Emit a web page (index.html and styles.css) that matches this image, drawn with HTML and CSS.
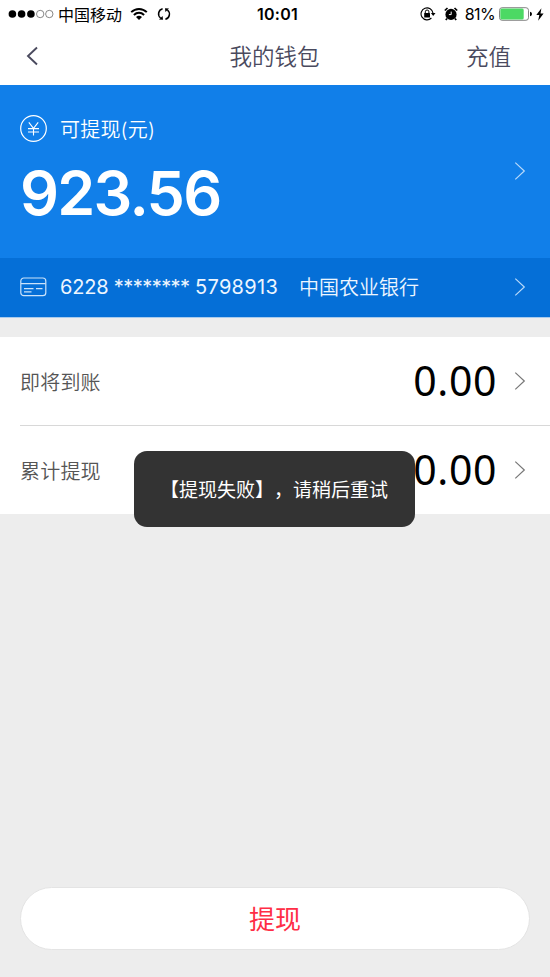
FILE: index.html
```html
<!DOCTYPE html>
<html lang="zh-CN">
<head>
<meta charset="utf-8">
<title>我的钱包</title>
<link rel="stylesheet" href="styles.css">
</head>
<body>
<div class="screen">
  <header class="top">
    <div class="status">
      <div class="status-left">
        <svg class="signal" width="46" height="10" viewBox="0 0 46 10"><g fill="#000"><circle cx="4.4" cy="5" r="3.8"/><circle cx="13.6" cy="5" r="3.8"/><circle cx="22.9" cy="5" r="3.8"/></g><g fill="none" stroke="#555" stroke-width=".7"><circle cx="32.2" cy="5" r="3.7"/><circle cx="41.3" cy="5" r="3.7"/></g></svg>
        <span class="carrier">中国移动</span>
        <svg class="wifi" width="18" height="14" viewBox="0 0 18 14"><g fill="none" stroke="#000" stroke-width="2"><path d="M1.2 5.1C5.7 .8 12.3 .8 16.8 5.1"/><path d="M3.9 8C7 5.1 11 5.1 14.1 8"/></g><path d="M6 10.1Q9 7.5 12 10.1L9 13Z"/></svg>
        <svg class="sync" width="14" height="14" viewBox="0 0 14 14"><g fill="none" stroke="#000" stroke-width="1.5"><path d="M5.6 1.7A5.3 5.3 0 0 0 3.6 11"/><path d="M8.4 12.3A5.3 5.3 0 0 0 10.4 3"/></g><path d="M2 12.4L6 12.8L5.6 9ZM12 1.6L8 1.2L8.4 5Z"/></svg>
      </div>
      <span class="clock">10:01</span>
      <div class="status-right">
        <svg class="lock" width="16" height="14" viewBox="0 0 16 14"><path d="M13 6.1A6 6 0 1 0 11.4 11" fill="none" stroke="#000" stroke-width="1.1"/><path d="M10.9 5.9H15.5L13.2 8.9Z"/><rect x="4.2" y="6.1" width="5.8" height="4.3" rx=".5"/><path d="M5.3 6.5V4.8a1.8 1.8 0 0 1 3.6 0V6.5" fill="none" stroke="#000" stroke-width="1"/></svg>
        <svg class="alarm" width="14" height="14" viewBox="0 0 14 14"><circle cx="7" cy="7.4" r="5.6"/><path d="M.8 3.5L3.5 1M13.2 3.5L10.5 1M3 11.5L1.8 13M11 11.5L12.2 13" stroke="#000" stroke-width="1.7"/><path d="M7.2 4.6V7.6H4.9" fill="none" stroke="#fff" stroke-width="1"/></svg>
        <span class="percent">81%</span>
        <svg class="battery" width="33" height="14" viewBox="0 0 33 14"><rect x=".5" y=".7" width="29" height="12.6" rx="2.6" fill="#fff" stroke="#777" stroke-width=".9"/><rect x="1.3" y="1.5" width="23.4" height="11" rx="1.5" fill="#4cd964"/><path d="M31 4.8Q33 5.3 33 7T31 9.2Z"/></svg>
        <svg class="bolt" width="8" height="13" viewBox="0 0 8 13"><path d="M5.4 .3L.3 7H3.3L2.2 12.7L7.6 5.5H4.5Z"/></svg>
      </div>
    </div>
    <nav class="nav">
      <svg class="back" width="12" height="20" viewBox="0 0 12 20"><path d="M11 1.5L2 10L11 18.5" fill="none" stroke="#4a4a5e" stroke-width="1.9"/></svg>
      <h1 class="title">我的钱包</h1>
      <span class="recharge">充值</span>
    </nav>
  </header>

  <section class="balance">
    <div class="balance-main">
      <div class="balance-label">
        <svg width="27" height="27" viewBox="0 0 27 27" fill="none" stroke="#fff"><circle cx="13.5" cy="13.5" r="12.8" stroke-width="1.2"/><path d="M8.8 7.3L13.5 13.4L18.2 7.3M13.5 13.4V20.5M8 13.6H19M8 17H19" stroke-width="1.1"/></svg>
        <span>可提现(元)</span>
      </div>
      <div class="amount">923.56</div>
    </div>
    <svg class="chevron" width="12" height="20" viewBox="0 0 12 20"><path d="M1.3 1.6L10.3 10L1.3 18.4"/></svg>
  </section>

  <section class="card">
    <svg class="card-icon" width="27" height="20" viewBox="0 0 27 20" fill="none" stroke="#cce3fa" stroke-width="1.2"><rect x=".8" y="1" width="25" height="17.7" rx="3"/><path d="M1 6.7H25.6M4 11.7H13.5M16 11.7H22.5M4 14.8H11.5"/></svg>
    <span class="card-number">6228 <span class="mask">********</span> <span class="tail">5798913</span></span>
    <span class="bank">中国农业银行</span>
    <svg class="chevron" width="12" height="20" viewBox="0 0 12 20"><path d="M1.3 1.6L10.3 10L1.3 18.4"/></svg>
  </section>

  <section class="list">
    <div class="row">
      <span class="row-label">即将到账</span>
      <span class="row-value">0.00</span>
      <svg class="chevron dark" width="12" height="20" viewBox="0 0 12 20"><path d="M1.3 1.6L10.3 10L1.3 18.4"/></svg>
    </div>
    <div class="row">
      <span class="row-label">累计提现</span>
      <span class="row-value">0.00</span>
      <svg class="chevron dark" width="12" height="20" viewBox="0 0 12 20"><path d="M1.3 1.6L10.3 10L1.3 18.4"/></svg>
    </div>
  </section>

  <button class="withdraw">提现</button>
  <div class="toast">【提现失败】，请稍后重试</div>
</div>
</body>
</html>
```
FILE: styles.css
```css
* { box-sizing: border-box; }
body { margin: 0; font-family: Inter, "Noto Sans CJK SC", sans-serif; }
.screen { position: relative; display: flex; flex-direction: column; width: 550px; height: 977px; background: #ededed; overflow: hidden; }
svg { display: block; flex: none; }
.top { flex: none; height: 85px; background: #fff; }
.status { display: grid; grid-template-columns: 1fr auto 1fr; align-items: center; height: 28px; padding: 0 6px 0 8px; color: #000; font-size: 16px; line-height: 28px; }
.status-left, .status-right { display: flex; align-items: center; height: 27px; }
.status-right { justify-content: flex-end; }
.carrier { margin-left: 4px; font-family: "Noto Sans CJK SC", sans-serif; }
.wifi { margin-left: 8px; }
.sync { margin-left: 9px; }
.clock { margin-left: 3px; font-weight: 600; font-size: 16px; letter-spacing: .3px; }
.alarm { margin-left: 8px; }
.percent { margin-left: 7px; letter-spacing: -.6px; }
.battery { margin-left: 4px; }
.bolt { margin-left: 4px; }
.nav { display: grid; grid-template-columns: 1fr auto 1fr; align-items: center; height: 57px; padding: 0 39px 2px 26px; color: #4a4a5e; font-family: "Noto Sans CJK SC", sans-serif; font-weight: 350; font-size: 22.5px; }
.title { margin: 0 0 2px 12px; font-size: 22.5px; font-weight: inherit; line-height: 32px; }
.recharge { justify-self: end; margin-bottom: 2px; line-height: 32px; }
.balance { flex: none; display: flex; align-items: center; justify-content: space-between; height: 173px; padding: 0 24px 2px 20px; background: #117fe9; color: #fff; }
.balance-main { align-self: flex-start; padding-top: 30px; }
.balance-label { display: flex; align-items: center; gap: 13px; height: 27px; font-size: 20px; font-weight: 350; letter-spacing: .2px; }
.amount { margin-top: 15px; height: 72px; line-height: 72px; font-size: 61px; font-weight: 600; letter-spacing: -1.7px; }
.chevron { fill: none; stroke: #b9dafa; stroke-width: 1.2; }
.chevron.dark { stroke: #777; }
.card { flex: none; display: flex; align-items: center; height: 60px; padding: 0 24px 2px 20px; border-bottom: 1px solid #a9cbed; background: #056fd7; color: #edf6ff; font-size: 20px; font-weight: 350; }
.card-number { margin-left: 13px; width: 239px; white-space: nowrap; letter-spacing: -.2px; }
.mask { letter-spacing: -.55px; }
.tail { letter-spacing: .3px; }
.card .chevron { margin-left: auto; }
.list { flex: none; margin-top: 19px; padding-left: 20px; background: #fff; }
.row { display: flex; align-items: center; height: 88px; padding-right: 24px; }
.row + .row { height: 89px; border-top: 1px solid #d8d8d8; }
.row-label { font-size: 20px; font-weight: 350; letter-spacing: .2px; color: #555; }
.row-value { margin-left: auto; margin-right: 17px; padding-bottom: 2px; font-family: "Noto Sans", sans-serif; font-size: 41px; line-height: 60px; font-weight: 400; letter-spacing: .6px; color: #000; }
.card-number { font-weight: 400; }
.withdraw { width: 510px; height: 63px; margin: auto 20px 27px; padding: 0 0 2px; border: 1px solid #e4e4e4; border-radius: 32px; background: #fff; color: #ff2d46; font-family: "Noto Sans CJK SC", sans-serif; font-size: 26px; }
.toast { position: absolute; left: 134px; top: 451px; width: 281px; height: 76px; padding-left: 26px; border-radius: 13px; background: #333; color: #fff; font-size: 19px; line-height: 79px; white-space: nowrap; text-spacing-trim: space-all; }
```
